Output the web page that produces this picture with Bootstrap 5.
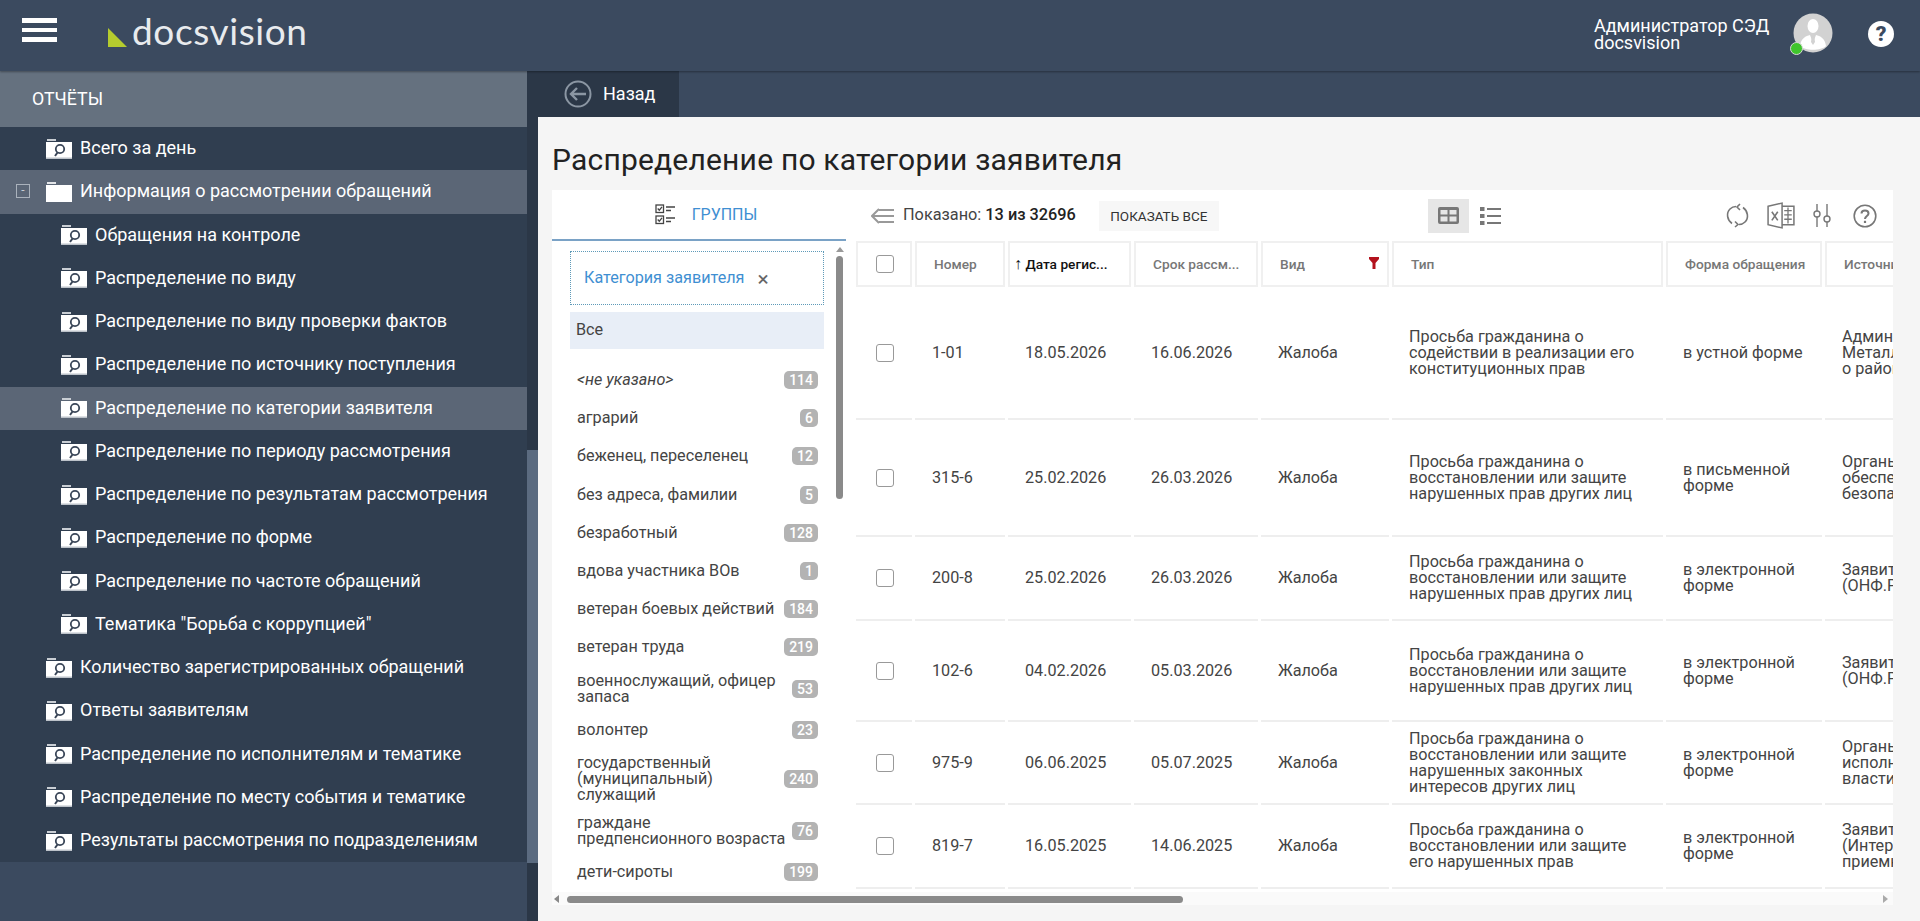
<!DOCTYPE html>
<html lang="ru">
<head>
    <meta charset="UTF-8">
    <meta name="viewport" content="width=device-width, initial-scale=1.0">
    <title>Docsvision - Распределение по категории заявителя</title>
    <link href="https://cdn.jsdelivr.net/npm/bootstrap@5.3.0/dist/css/bootstrap.min.css" rel="stylesheet">
    <style>
        html, body { height: 100%; }
        body {
            font-family: Roboto, "Liberation Sans", sans-serif;
            background: #3b4a5f;
            overflow: hidden;
            color: #444;
        }
        .topbar { height: 71px; background: #3b4a5f; box-shadow: 0 1px 2px rgba(0,0,0,.35); position: relative; }
        .burger { width: 35px; margin: 0 0 11px 22px; }
        .burger span { display: block; height: 4.5px; background: #fff; margin-bottom: 5px; }
        .brand { margin: 0 0 9px 51px; color: #e8ebee; font-family: Lato, sans-serif; font-weight: 400; font-size: 37px; line-height: 38px; letter-spacing: .6px; }
        .brand svg { margin: 12px 5px 0 0; }
        .user-block { margin-bottom: 4px; }
        .user-name { color: #fff; font-size: 18px; line-height: 17px; width: 199px; }
        .avatar-wrap { width: 42px; height: 42px; margin-right: 33px; }
        .avatar-dot { position: absolute; left: -3px; bottom: 0; width: 13px; height: 13px; border-radius: 50%; background: #3fc52c; border: 1px solid #d8d8d8; }
        .help-dot { width: 26px; height: 26px; border-radius: 50%; background: #fff; color: #3b4a5f; font-weight: 900; font-size: 21px; line-height: 26px; text-align: center; margin-right: 26px; }

        .shell { height: 850px; }
        .side { width: 527px; background: #3b4a5f; }
        .side-title { height: 56px; background: #65717f; color: #fff; font-size: 17.8px; padding-left: 32px; }
        .side-list { background: #303e50; }
        .side-row { height: 43.25px; color: #fff; font-size: 18px; padding: 0 0 2px 46px; position: relative; white-space: nowrap; }
        .side-row.sub { padding-left: 61px; }
        .side-row.hl { background: #5b6676; }
        .side-row svg { width: 26px; height: 20px; margin: 2px 8px 0 0; flex: none; }
        .tree-box { position: absolute; left: 16px; top: 14px; width: 14px; height: 14px; border: 1px solid #aab2bc; color: #c6ccd3; font-size: 12px; line-height: 11px; text-align: center; }
        .side-scroll { width: 11px; background: #2b3747; }
        .side-thumb { height: 413px; margin-top: 379px; background: #5b6b80; }

        .work { background: #3b4a5f; min-width: 0; }
        .backbar { height: 46px; }
        .back-tab { width: 141px; background: #2b3747; color: #fff; font-size: 18px; font-weight: 400; padding: 0 0 1px 26px; gap: 11px; }
        .page { height: 804px; background: #f5f5f5; padding: 0 0 0 14px; }
        .page-title { font-size: 30px; font-weight: 400; color: #222; line-height: 56px; padding-top: 15px; margin: 0; height: 73px; letter-spacing: .2px; }
        .panel { width: 1341px; height: 715px; background: #fff; position: relative; }

        .groups { width: 294px; }
        .groups-tab { height: 51px; border-bottom: 2px solid #7aa2c6; color: #3f8fd2; font-size: 16px; gap: 17px; padding-left: 14px; }
        .groups-body { height: 651px; overflow: hidden; position: relative; padding: 10px 22px 0 18px; }
        .chosen { height: 54px; border: 1px dotted #5e9ab8; color: #3f8fd2; font-size: 16.2px; padding: 14px 13px 0; }
        .chosen-x { color: #666; font-size: 21px; line-height: 18px; margin-left: 9px; vertical-align: -3px; }
        .all-row { height: 37px; margin-top: 7px; background: #e8eef7; font-size: 16.2px; padding-left: 6px; line-height: 36px; color: #444; }
        .grp-list { margin-top: 12px; }
        .grp-item { min-height: 38.2px; padding: 6px 6px 6px 7px; line-height: 16px; font-size: 16.2px; color: #444; gap: 4px; }
        .grp-item .badge { background: #b3b3b3; color: #fff; font-size: 14px; font-weight: 500; border-radius: 5px; padding: 2px 5px; line-height: 14px; }
        .grp-vbar { position: absolute; left: 284px; top: 6px; width: 7px; }
        .grp-vbar i { display: block; width: 0; height: 0; margin: 0 0 4px 0; border: 4px solid transparent; border-top: 0; border-bottom: 5px solid #999; }
        .grp-vbar b { display: block; height: 243px; background: #8a8a8a; border-radius: 4px; }

        .regs { width: 1047px; min-width: 0; }
        .tools { height: 51px; padding-left: 25px; font-size: 16.3px; color: #444; }
        .tools b { font-weight: 500; color: #222; }
        .show-all { width: 120px; height: 30px; background: #f7f7f7; color: #333; font-size: 13.5px; margin-left: 23px; padding: 0; border: 0; border-radius: 0; line-height: 30px; }
        .view-on { width: 41px; height: 34px; background: #e6e6e6; margin-left: 209px; }
        .view-off { margin-left: 11px; }
        .tool-right { margin-left: auto; gap: 18px; padding-right: 16px; }

        .table-clip { height: 651px; overflow: hidden; }
        .reg-table { width: 1275px; table-layout: fixed; border-collapse: separate; border-spacing: 3px 0; margin: 0 0 0 7px; }
        .reg-table > :not(caption) > * > * { padding: 0 0 0 17px; border-bottom: 2px solid #eee; background: #fff; box-shadow: none; vertical-align: middle; color: #444; font-size: 16.2px; line-height: 16px; }
        .reg-table > thead > tr > th { height: 46px; border: 2px solid #f0f0f0; color: #777; font-size: 13.7px; font-weight: 500; white-space: nowrap; overflow: hidden; position: relative; }
        .reg-table > thead > tr > th.cur { color: #111; padding-left: 4px; }
        .sort-arrow { font-size: 16px; font-weight: 700; }
        .reg-table > :not(caption) > * > .cb { padding: 0 0 0 1px; text-align: center; }
        .reg-table .form-check-input { width: 18px; height: 18px; margin: 0; border: 1.5px solid #999; border-radius: 3px; float: none; vertical-align: middle; }
        .reg-table .src { white-space: nowrap; }
        .c-cb { width: 56px; } .c-num { width: 90px; } .c-date { width: 123px; } .c-term { width: 124px; }
        .c-kind { width: 128px; } .c-type { width: 271px; } .c-form { width: 156px; } .c-src { width: 300px; }
        .h1r { height: 133px; } .h2r { height: 117px; } .h3r { height: 84px; } .h4r { height: 101px; } .h5r { height: 83px; } .h6r { height: 84px; }
        .funnel { position: absolute; right: 8px; top: 14px; }

        .hbar { height: 13px; background: #fafafa; position: absolute; left: 0; right: 0; bottom: 0; }
        .hbar b { position: absolute; left: 15px; top: 4px; width: 616px; height: 7px; background: #8a8a8a; border-radius: 4px; }
        .arrow-l, .arrow-r { position: absolute; top: 3px; width: 0; height: 0; border: 4px solid transparent; }
        .arrow-l { left: 2px; border-left: 0; border-right: 5px solid #888; }
        .arrow-r { right: 5px; border-right: 0; border-left: 5px solid #aaa; }
    </style>
</head>
<body>
    <svg width="0" height="0" class="position-absolute">
        <symbol id="rep" viewBox="0 0 26 20">
            <rect x="1" y="0" width="9" height="2" fill="#c9ced4"/>
            <rect x="0" y="3" width="26" height="17" fill="#fff"/>
            <rect x="0" y="18.5" width="26" height="1.5" fill="#bcc2c9"/>
            <circle cx="14" cy="10" r="4.2" fill="none" stroke="#3a4658" stroke-width="1.8"/>
            <path d="M11.5 13.5 L9 17" stroke="#3a4658" stroke-width="2"/>
        </symbol>
        <symbol id="dir" viewBox="0 0 26 20">
            <rect x="1" y="0" width="9" height="2" fill="#e3e5e8"/>
            <rect x="0" y="3" width="26" height="17" fill="#fff"/>
        </symbol>
    </svg>

    <header class="topbar d-flex align-items-center">
        <div class="burger"><span></span><span></span><span class="mb-0"></span></div>
        <div class="brand d-flex align-items-center">
            <svg width="19" height="19" viewBox="0 0 19 19"><path d="M0 0 L19 19 L0 19 Z" fill="#b5cc2e"/></svg>
            <span>docsvision</span>
        </div>
        <div class="user-block ms-auto d-flex align-items-center">
            <div class="user-name">Администратор СЭД<br>docsvision</div>
            <div class="avatar-wrap position-relative">
                <svg width="40" height="40" viewBox="0 0 40 40">
                    <circle cx="20" cy="20" r="19.5" fill="#d2d2d2"/>
                    <ellipse cx="20" cy="13" rx="5.5" ry="7" fill="#fff"/>
                    <path d="M7 33 C8 25 13 23 17 22 L20 30 L23 22 C27 23 32 25 33 33 C28 38 12 38 7 33 Z" fill="#fff"/>
                    <path d="M19 22 h2 l1 7 l-2 3 l-2 -3 z" fill="#d2d2d2"/>
                </svg>
                <span class="avatar-dot"></span>
            </div>
            <div class="help-dot">?</div>
        </div>
    </header>

    <div class="shell d-flex">
        <aside class="side flex-shrink-0">
            <div class="side-title d-flex align-items-center">ОТЧЁТЫ</div>
            <div class="side-list">
                <div class="side-row d-flex align-items-center"><svg><use href="#rep"/></svg>Всего за день</div>
                <div class="side-row hl d-flex align-items-center"><span class="tree-box">-</span><svg><use href="#dir"/></svg>Информация о рассмотрении обращений</div>
                <div class="side-row sub d-flex align-items-center"><svg><use href="#rep"/></svg>Обращения на контроле</div>
                <div class="side-row sub d-flex align-items-center"><svg><use href="#rep"/></svg>Распределение по виду</div>
                <div class="side-row sub d-flex align-items-center"><svg><use href="#rep"/></svg>Распределение по виду проверки фактов</div>
                <div class="side-row sub d-flex align-items-center"><svg><use href="#rep"/></svg>Распределение по источнику поступления</div>
                <div class="side-row sub hl d-flex align-items-center"><svg><use href="#rep"/></svg>Распределение по категории заявителя</div>
                <div class="side-row sub d-flex align-items-center"><svg><use href="#rep"/></svg>Распределение по периоду рассмотрения</div>
                <div class="side-row sub d-flex align-items-center"><svg><use href="#rep"/></svg>Распределение по результатам рассмотрения</div>
                <div class="side-row sub d-flex align-items-center"><svg><use href="#rep"/></svg>Распределение по форме</div>
                <div class="side-row sub d-flex align-items-center"><svg><use href="#rep"/></svg>Распределение по частоте обращений</div>
                <div class="side-row sub d-flex align-items-center"><svg><use href="#rep"/></svg>Тематика "Борьба с коррупцией"</div>
                <div class="side-row d-flex align-items-center"><svg><use href="#rep"/></svg>Количество зарегистрированных обращений</div>
                <div class="side-row d-flex align-items-center"><svg><use href="#rep"/></svg>Ответы заявителям</div>
                <div class="side-row d-flex align-items-center"><svg><use href="#rep"/></svg>Распределение по исполнителям и тематике</div>
                <div class="side-row d-flex align-items-center"><svg><use href="#rep"/></svg>Распределение по месту события и тематике</div>
                <div class="side-row d-flex align-items-center"><svg><use href="#rep"/></svg>Результаты рассмотрения по подразделениям</div>
            </div>
        </aside>
        <div class="side-scroll flex-shrink-0"><div class="side-thumb"></div></div>

        <main class="work flex-grow-1">
            <div class="backbar d-flex">
                <div class="back-tab d-flex align-items-center">
                    <svg width="28" height="28" viewBox="0 0 28 28" fill="none" stroke="#8b96a3" stroke-width="2">
                        <circle cx="14" cy="14" r="12.5"/>
                        <path d="M22 14 H7 M13 8 L7 14 L13 20" stroke-width="2.4"/>
                    </svg>
                    <span>Назад</span>
                </div>
            </div>
            <div class="page">
                <h1 class="page-title">Распределение по категории заявителя</h1>
                <div class="panel d-flex">
                    <div class="groups flex-shrink-0">
                        <div class="groups-tab d-flex align-items-center justify-content-center">
                            <svg width="20" height="21" viewBox="0 0 20 21" fill="none" stroke="#444" stroke-width="1.3">
                                <rect x="1" y="1" width="7.5" height="7.5"/>
                                <rect x="1" y="12" width="7.5" height="7.5"/>
                                <path d="M2.7 4.5 L4.3 6.2 L7 2.8 M2.7 15.5 L4.3 17.2 L7 13.8"/>
                                <path d="M11 3 H20 M11 6.5 H16 M11 14 H20 M11 17.5 H16" stroke-width="1.7"/>
                            </svg>
                            <span>ГРУППЫ</span>
                        </div>
                        <div class="groups-body">
                            <div class="chosen">Категория заявителя <span class="chosen-x">×</span></div>
                            <div class="all-row">Все</div>
                            <div class="grp-list">
                                <div class="grp-item d-flex align-items-center justify-content-between"><em>&lt;не указано&gt;</em><span class="badge">114</span></div>
                                <div class="grp-item d-flex align-items-center justify-content-between"><span>аграрий</span><span class="badge">6</span></div>
                                <div class="grp-item d-flex align-items-center justify-content-between"><span>беженец, переселенец</span><span class="badge">12</span></div>
                                <div class="grp-item d-flex align-items-center justify-content-between"><span>без адреса, фамилии</span><span class="badge">5</span></div>
                                <div class="grp-item d-flex align-items-center justify-content-between"><span>безработный</span><span class="badge">128</span></div>
                                <div class="grp-item d-flex align-items-center justify-content-between"><span>вдова участника ВОв</span><span class="badge">1</span></div>
                                <div class="grp-item d-flex align-items-center justify-content-between"><span>ветеран боевых действий</span><span class="badge">184</span></div>
                                <div class="grp-item d-flex align-items-center justify-content-between"><span>ветеран труда</span><span class="badge">219</span></div>
                                <div class="grp-item d-flex align-items-center justify-content-between"><span>военнослужащий, офицер<br>запаса</span><span class="badge">53</span></div>
                                <div class="grp-item d-flex align-items-center justify-content-between"><span>волонтер</span><span class="badge">23</span></div>
                                <div class="grp-item d-flex align-items-center justify-content-between"><span>государственный<br>(муниципальный)<br>служащий</span><span class="badge">240</span></div>
                                <div class="grp-item d-flex align-items-center justify-content-between"><span class="text-nowrap">граждане<br>предпенсионного возраста</span><span class="badge">76</span></div>
                                <div class="grp-item d-flex align-items-center justify-content-between"><span>дети-сироты</span><span class="badge">199</span></div>
                            </div>
                            <div class="grp-vbar"><i></i><b></b></div>
                        </div>
                    </div>
                    <div class="regs">
                        <div class="tools d-flex align-items-center">
                            <svg class="me-2" width="24" height="16" viewBox="0 0 24 16" fill="none" stroke="#999" stroke-width="2">
                                <path d="M8 1 L1 8 L8 15 M1 8 H23 M8 2 H23 M8 14 H23"/>
                            </svg>
                            <span>Показано:&nbsp;<b>13 из 32696</b></span>
                            <button type="button" class="btn show-all">ПОКАЗАТЬ ВСЕ</button>
                            <div class="view-on d-flex align-items-center justify-content-center">
                                <svg width="21" height="17" viewBox="0 0 21 17"><path fill="#777" fill-rule="evenodd" d="M2 0 H19 a2 2 0 0 1 2 2 V15 a2 2 0 0 1 -2 2 H2 a2 2 0 0 1 -2 -2 V2 a2 2 0 0 1 2 -2 Z M2.5 3 V7.5 H9.5 V3 Z M11.5 3 V7.5 H18.5 V3 Z M2.5 9.5 V14.5 H9.5 V9.5 Z M11.5 9.5 V14.5 H18.5 V9.5 Z"/></svg>
                            </div>
                            <svg class="view-off" width="21" height="18" viewBox="0 0 21 18" fill="#777">
                                <rect x="0" y="0" width="4.5" height="4"/><rect x="0" y="7" width="4.5" height="4"/><rect x="0" y="14" width="4.5" height="4"/>
                                <rect x="7" y="1" width="14" height="2"/><rect x="7" y="8" width="14" height="2"/><rect x="7" y="15" width="14" height="2"/>
                            </svg>
                            <div class="tool-right d-flex align-items-center">
                                <svg width="23" height="25" viewBox="0 0 23 25" fill="none" stroke="#777" stroke-width="1.6">
                                    <path d="M6 20.5 C1 17 0 10 4 6 C6 4 9 3.5 10 3.5 M17 4.5 C22 8 23 15 19 19 C17 21 14 21.5 13 21.5"/>
                                    <path d="M14 1 L11 4 L14 7 M9 18.5 L12 21.5 L9 24"/>
                                </svg>
                                <svg width="28" height="27" viewBox="0 0 26 25" fill="none" stroke="#777" stroke-width="1.4">
                                    <path d="M1 4 L14 1 V24 L1 21 Z M14 4 H25 V21 H14"/>
                                    <path d="M16 8 H23 M16 12 H23 M16 16 H23 M19.5 5 V20" stroke-width="1.2"/>
                                    <path d="M4.5 9 L10 17 M10 9 L4.5 17" stroke-width="1.5"/>
                                </svg>
                                <svg class="me-1" width="18" height="24" viewBox="0 0 18 24" fill="none" stroke="#777" stroke-width="1.4">
                                    <path d="M4 0 V7 M4 13 V23 M14 0 V12 M14 18 V23"/>
                                    <circle cx="4" cy="10" r="3"/><circle cx="14" cy="15" r="3"/>
                                </svg>
                                <svg width="24" height="24" viewBox="0 0 24 24" fill="none" stroke="#777" stroke-width="1.6">
                                    <circle cx="12" cy="12" r="10.8"/>
                                    <path d="M8.5 9.5 C8.5 5.5 15.5 5.5 15.5 9.5 C15.5 12 12 12 12 15" stroke-width="2"/>
                                    <path d="M12 16.8 V19" stroke-width="2.2"/>
                                </svg>
                            </div>
                        </div>
                        <div class="table-clip">
                            <table class="table reg-table">
                                <colgroup>
                                    <col class="c-cb"><col class="c-num"><col class="c-date"><col class="c-term"><col class="c-kind"><col class="c-type"><col class="c-form"><col class="c-src">
                                </colgroup>
                                <thead>
                                    <tr>
                                        <th class="cb"><input class="form-check-input" type="checkbox" aria-label="Выбрать все"></th>
                                        <th>Номер</th>
                                        <th class="cur"><span class="sort-arrow">↑</span> Дата регис...</th>
                                        <th>Срок рассм...</th>
                                        <th>Вид<svg class="funnel" width="10" height="12" viewBox="0 0 10 12"><path d="M0 0 H10 V2 L6.5 6 V12 H3.5 V6 L0 2 Z" fill="#b3121d"/></svg></th>
                                        <th>Тип</th>
                                        <th>Форма обращения</th>
                                        <th>Источник</th>
                                    </tr>
                                </thead>
                                <tbody>
                                    <tr class="h1r">
                                        <td class="cb"><input class="form-check-input" type="checkbox" aria-label="Выбрать"></td>
                                        <td>1-01</td><td>18.05.2026</td><td>16.06.2026</td><td>Жалоба</td>
                                        <td>Просьба гражданина о<br>содействии в реализации его<br>конституционных прав</td>
                                        <td>в устной форме</td>
                                        <td class="src">Администрация<br>Металлургического<br>о районе</td>
                                    </tr>
                                    <tr class="h2r">
                                        <td class="cb"><input class="form-check-input" type="checkbox" aria-label="Выбрать"></td>
                                        <td>315-6</td><td>25.02.2026</td><td>26.03.2026</td><td>Жалоба</td>
                                        <td>Просьба гражданина о<br>восстановлении или защите<br>нарушенных прав других лиц</td>
                                        <td>в письменной<br>форме</td>
                                        <td class="src">Органы<br>обеспечения<br>безопасности</td>
                                    </tr>
                                    <tr class="h3r">
                                        <td class="cb"><input class="form-check-input" type="checkbox" aria-label="Выбрать"></td>
                                        <td>200-8</td><td>25.02.2026</td><td>26.03.2026</td><td>Жалоба</td>
                                        <td>Просьба гражданина о<br>восстановлении или защите<br>нарушенных прав других лиц</td>
                                        <td>в электронной<br>форме</td>
                                        <td class="src">Заявитель<br>(ОНФ.РФ)</td>
                                    </tr>
                                    <tr class="h4r">
                                        <td class="cb"><input class="form-check-input" type="checkbox" aria-label="Выбрать"></td>
                                        <td>102-6</td><td>04.02.2026</td><td>05.03.2026</td><td>Жалоба</td>
                                        <td>Просьба гражданина о<br>восстановлении или защите<br>нарушенных прав других лиц</td>
                                        <td>в электронной<br>форме</td>
                                        <td class="src">Заявитель<br>(ОНФ.РФ)</td>
                                    </tr>
                                    <tr class="h5r">
                                        <td class="cb"><input class="form-check-input" type="checkbox" aria-label="Выбрать"></td>
                                        <td>975-9</td><td>06.06.2025</td><td>05.07.2025</td><td>Жалоба</td>
                                        <td>Просьба гражданина о<br>восстановлении или защите<br>нарушенных законных<br>интересов других лиц</td>
                                        <td>в электронной<br>форме</td>
                                        <td class="src">Органы<br>исполнительной<br>власти</td>
                                    </tr>
                                    <tr class="h6r">
                                        <td class="cb"><input class="form-check-input" type="checkbox" aria-label="Выбрать"></td>
                                        <td>819-7</td><td>16.05.2025</td><td>14.06.2025</td><td>Жалоба</td>
                                        <td>Просьба гражданина о<br>восстановлении или защите<br>его нарушенных прав</td>
                                        <td>в электронной<br>форме</td>
                                        <td class="src">Заявитель<br>(Интернет-<br>приемная)</td>
                                    </tr>
                                </tbody>
                            </table>
                        </div>
                    </div>
                    <div class="hbar"><span class="arrow-l"></span><b></b><span class="arrow-r"></span></div>
                </div>
            </div>
        </main>
    </div>
</body>
</html>
